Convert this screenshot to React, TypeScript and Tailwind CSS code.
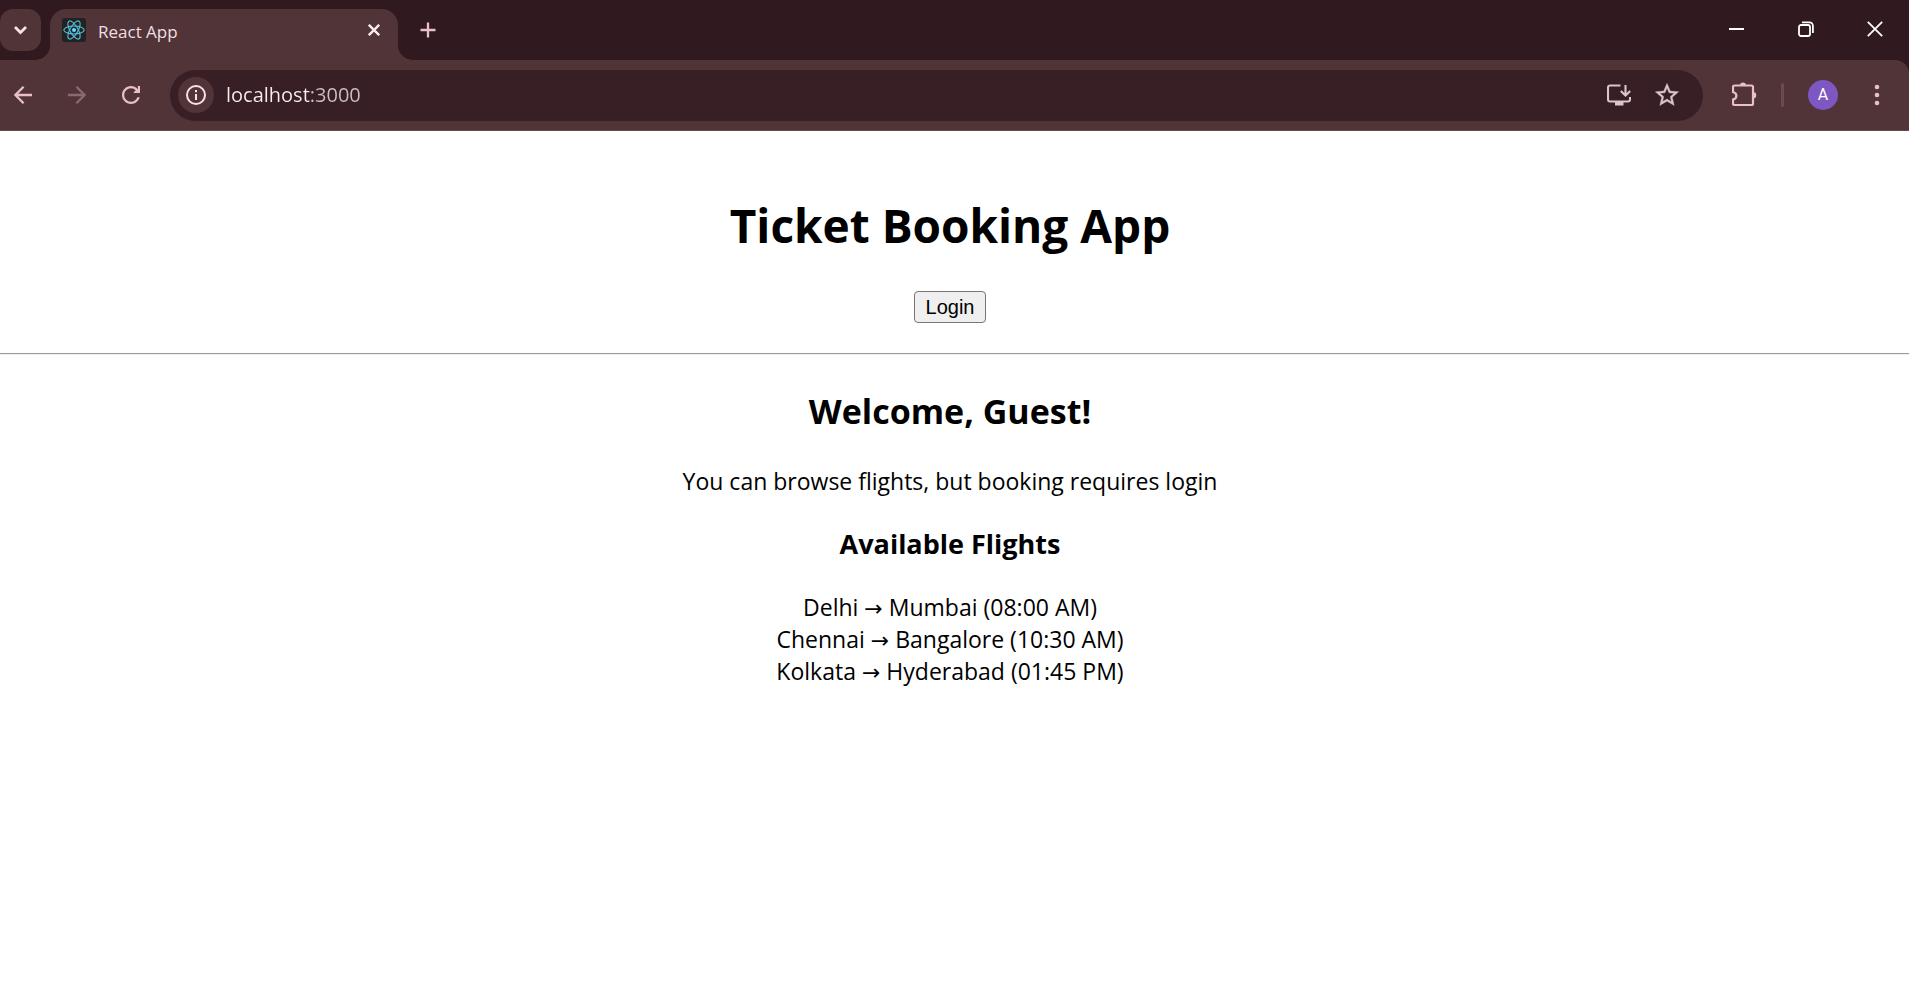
import type { ReactNode } from "react";

const flights = [
  { from: "Delhi", to: "Mumbai", time: "08:00 AM" },
  { from: "Chennai", to: "Bangalore", time: "10:30 AM" },
  { from: "Kolkata", to: "Hyderabad", time: "01:45 PM" },
];

function IconButton({ label, className, children }: { label: string; className: string; children: ReactNode }) {
  return (
    <button type="button" aria-label={label} className={`flex shrink-0 items-center justify-center ${className}`}>
      {children}
    </button>
  );
}

function ReactLogo() {
  return (
    <svg viewBox="0 0 24 24" className="size-6 shrink-0" fill="none" stroke="#53c1de" strokeWidth="1.1" aria-hidden="true">
      <rect width="24" height="24" rx="3" fill="#222222" stroke="none" />
      <circle cx="12" cy="12" r="2" fill="#61dafb" stroke="none" />
      <ellipse cx="12" cy="12" rx="10.2" ry="4" />
      <ellipse cx="12" cy="12" rx="10.2" ry="4" transform="rotate(60 12 12)" />
      <ellipse cx="12" cy="12" rx="10.2" ry="4" transform="rotate(120 12 12)" />
    </svg>
  );
}

function TabStrip() {
  return (
    <div className="flex h-15 items-end bg-[#30191f]">
      <IconButton label="Search tabs" className="mb-[9px] h-[42px] w-[41px] rounded-[13px] bg-[#503438] text-[#f5e3e6]">
        <svg viewBox="0 0 14 14" className="size-3.5" fill="none" stroke="currentColor" strokeWidth="2.8" aria-hidden="true">
          <path d="M1 4 L6.5 9.5 L12 4" />
        </svg>
      </IconButton>
      <svg viewBox="0 0 14 14" className="-ml-1.5 size-[15px] shrink-0" aria-hidden="true">
        <path d="M14 0 V14 H0 A14 14 0 0 0 14 0Z" fill="#503438" />
      </svg>
      <div className="flex h-[51px] w-[348px] items-start rounded-t-2xl bg-[#503438] pt-[9px] pr-3 pl-3">
        <ReactLogo />
        <span className="ml-3 grow text-[17px] leading-7 text-[#f0dfe2]">React App</span>
        <IconButton label="Close tab" className="size-6 text-[#f8ecee]">
          <svg viewBox="0 0 12 12" className="size-3" fill="none" stroke="currentColor" strokeWidth="2.4" aria-hidden="true">
            <path d="M.8 .8 L11.2 11.2 M11.2 .8 L.8 11.2" />
          </svg>
        </IconButton>
      </div>
      <svg viewBox="0 0 14 14" className="size-[15px] shrink-0" aria-hidden="true">
        <path d="M0 0 V14 H14 A14 14 0 0 1 0 0Z" fill="#503438" />
      </svg>
      <IconButton label="New tab" className="h-15 w-[30px] text-[#eabfc8]">
        <svg viewBox="0 0 16 16" className="size-4" fill="none" stroke="currentColor" strokeWidth="2.3" aria-hidden="true">
          <path d="M8 .5 V15.5 M.5 8 H15.5" />
        </svg>
      </IconButton>
      <div className="ml-auto flex h-15 pb-0.5 text-white">
        <IconButton label="Minimize" className="w-[69px]">
          <svg viewBox="0 0 15 15" className="size-[15px]" fill="none" stroke="currentColor" strokeWidth="2" aria-hidden="true">
            <path d="M0 7 H15" />
          </svg>
        </IconButton>
        <IconButton label="Restore" className="w-[69px]">
          <svg viewBox="0 0 16 16" className="size-4" fill="none" stroke="currentColor" strokeWidth="1.8" aria-hidden="true">
            <rect x="1" y="4" width="11" height="11" rx="2" />
            <path d="M4 1.3 H11.5 A3.4 3.4 0 0 1 14.9 4.7 V12" />
          </svg>
        </IconButton>
        <IconButton label="Close window" className="w-[69px]">
          <svg viewBox="0 0 16 16" className="size-4" fill="none" stroke="currentColor" strokeWidth="1.8" aria-hidden="true">
            <path d="M.8 .8 L15.2 15.2 M15.2 .8 L.8 15.2" />
          </svg>
        </IconButton>
      </div>
    </div>
  );
}

function Toolbar() {
  return (
    <div className="bg-[#30191f]">
      <div className="flex h-[71px] items-center rounded-tr-[14px] border-b border-[#67494e] bg-[#503438] text-[#eabfc8]">
        <IconButton label="Back" className="h-9 w-[46px]">
          <svg viewBox="0 0 18 18" className="size-[18px]" fill="none" stroke="currentColor" strokeWidth="2.3" aria-hidden="true">
            <path d="M18 9 H1.5 M9.6 .8 L1.4 9 L9.6 17.2" />
          </svg>
        </IconButton>
        <IconButton label="Forward" className="ml-2 h-9 w-[46px] text-[#8a6a72]">
          <svg viewBox="0 0 18 18" className="size-[18px]" fill="none" stroke="currentColor" strokeWidth="2.3" aria-hidden="true">
            <path d="M0 9 H16.5 M8.4 .8 L16.6 9 L8.4 17.2" />
          </svg>
        </IconButton>
        <IconButton label="Reload" className="ml-2 h-9 w-[46px]">
          <svg viewBox="4 4 16 16" className="size-[18px]" fill="currentColor" aria-hidden="true">
            <path d="M17.65 6.35C16.2 4.9 14.21 4 12 4c-4.42 0-7.99 3.58-7.99 8s3.57 8 7.99 8c3.73 0 6.84-2.55 7.73-6h-2.08c-.82 2.33-3.04 4-5.65 4-3.31 0-6-2.69-6-6s2.69-6 6-6c1.66 0 3.14.69 4.22 1.78L14.3 9.8V10.2h5.7V4h-1.9v2.8z" />
          </svg>
        </IconButton>
        <div className="ml-4 flex h-[51px] min-w-0 grow items-center rounded-full bg-[#381f25] pr-3 pl-2">
          <IconButton label="View site information" className="size-9 rounded-full bg-[#503438] text-[#f5e3e6]">
            <svg viewBox="0 0 20 20" className="size-5" fill="none" stroke="currentColor" strokeWidth="2" aria-hidden="true">
              <circle cx="10" cy="10" r="9" />
              <path d="M10 9 V15 M10 5 V7.2" />
            </svg>
          </IconButton>
          <input
            type="text"
            aria-label="Address"
            defaultValue="localhost:3000"
            className="ml-3 min-w-0 grow bg-[linear-gradient(90deg,#fbeef0_84px,#cfbfc2_84px)] bg-clip-text text-[20px] leading-7 text-transparent outline-none"
          />
          <IconButton label="Install app" className="h-9 w-12 text-[#d9c6ca]">
            <svg viewBox="0 0 24 22" className="h-[22px] w-6" fill="none" stroke="currentColor" strokeWidth="2.1" aria-hidden="true">
              <path d="M13.5 1.5 H3 A2 2 0 0 0 1 3.5 V15.5 A2 2 0 0 0 3 17.5 H21 A2 2 0 0 0 23 15.5 V13" />
              <path d="M18.5 1 V11 M13.8 7 L18.5 11.6 L23.2 7" />
              <path d="M8 18 H16.5 V21.5 H8Z" fill="currentColor" stroke="none" />
            </svg>
          </IconButton>
          <IconButton label="Bookmark this tab" className="h-9 w-12 text-[#d9c6ca]">
            <svg viewBox="0 0 24 24" className="size-7" fill="currentColor" stroke="currentColor" strokeWidth=".3" aria-hidden="true">
              <path d="M22 9.24l-7.19-.62L12 2 9.19 8.63 2 9.24l5.46 4.73L5.82 21 12 17.27 18.18 21l-1.63-7.03L22 9.24zM12 15.4l-3.76 2.27 1-4.28-3.32-2.88 4.38-.38L12 6.1l1.71 4.04 4.38.38-3.32 2.88 1 4.28L12 15.4z" />
            </svg>
          </IconButton>
        </div>
        <IconButton label="Extensions" className="ml-[18px] h-9 w-12">
          <svg viewBox="0 0 26 26" className="size-[26px]" fill="none" stroke="currentColor" strokeWidth="2.2" aria-hidden="true">
            <path d="M2.5 3.5 H19.5 A1.5 1.5 0 0 1 21 5 V21.5 A1.5 1.5 0 0 1 19.5 23 H2.5 A1.5 1.5 0 0 1 1 21.5 V17.5 C5.5 16.5 5.5 11 1 10 V5 A1.5 1.5 0 0 1 2.5 3.5Z" />
            <path d="M8 3.5 A3 3 0 0 1 14 3.5Z M21 10 A3.2 3.2 0 0 1 21 16.5Z" fill="currentColor" stroke="none" />
          </svg>
        </IconButton>
        <span className="ml-3 h-6 w-[3px] shrink-0 rounded-full bg-[#6b4a51]" />
        <IconButton label="Account" className="ml-6 size-[30px] rounded-full bg-[#7e57c2] font-['Roboto',sans-serif] text-[16px] text-white">
          A
        </IconButton>
        <IconButton label="Menu" className="mr-[14px] ml-[21px] h-9 w-9">
          <svg viewBox="0 0 6 22" className="h-[22px] w-1.5" fill="currentColor" aria-hidden="true">
            <circle cx="3" cy="3" r="2.3" />
            <circle cx="3" cy="11" r="2.3" />
            <circle cx="3" cy="19" r="2.3" />
          </svg>
        </IconButton>
      </div>
    </div>
  );
}

export default function App() {
  return (
    <div className="min-h-screen bg-white font-['Open_Sans','Noto_Sans',sans-serif] text-black">
      <header>
        <TabStrip />
        <Toolbar />
      </header>
      <main className="text-center text-[23px] leading-8">
        <section className="flex flex-col items-center pt-[62px] pr-[9px]">
          <h1 className="text-[46px] leading-16 font-bold">Ticket Booking App</h1>
          <button
            type="button"
            className="mt-[34px] h-8 w-[72px] rounded-[4px] border border-[#767676] bg-[#efefef] font-['Liberation_Sans',sans-serif] text-[20px] leading-6"
          >
            Login
          </button>
        </section>
        <hr className="mt-[30px] h-0.5 border-t border-b border-t-[#9a9a9a] border-b-[#eeeeee]" />
        <section className="pr-[9px]">
          <h2 className="mt-8 text-[34px] leading-12 font-bold">Welcome, Guest!</h2>
          <p className="mt-[30px]">You can browse flights, but booking requires login</p>
          <h3 className="mt-[31px] text-[27px] leading-8 font-bold">Available Flights</h3>
          <ul className="mt-[31px]">
            {flights.map((f) => (
              <li key={f.from}>
                {f.from} <span className="font-['DejaVu_Sans',sans-serif] text-[22px] leading-none">→</span> {f.to} ({f.time})
              </li>
            ))}
          </ul>
        </section>
      </main>
    </div>
  );
}
